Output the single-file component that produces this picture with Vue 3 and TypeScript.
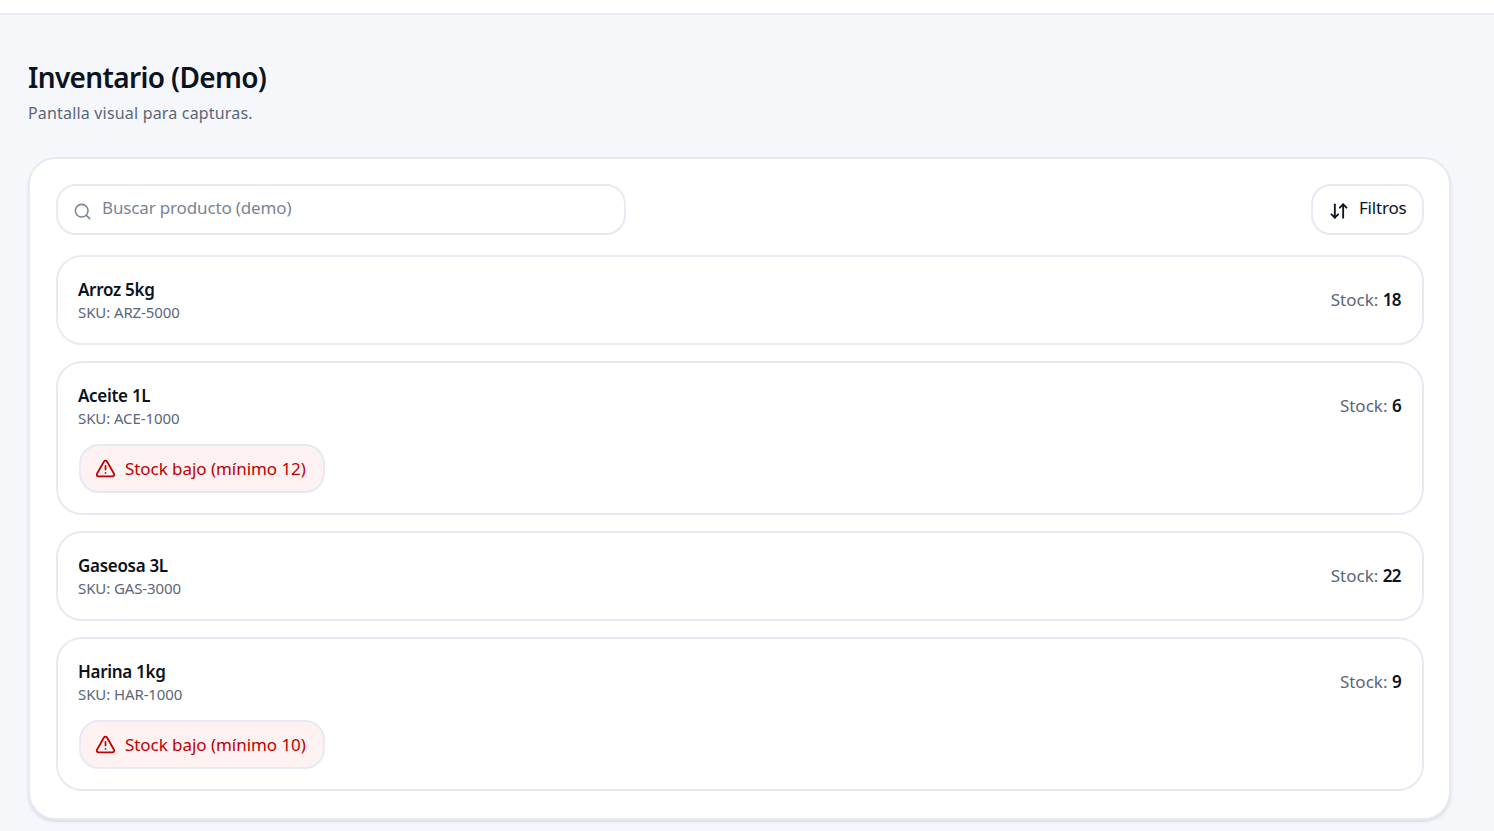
<script setup lang="ts">
interface Product {
  name: string
  sku: string
  stock: number
  min: number
}

const products: Product[] = [
  { name: 'Arroz 5kg', sku: 'ARZ-5000', stock: 18, min: 10 },
  { name: 'Aceite 1L', sku: 'ACE-1000', stock: 6, min: 12 },
  { name: 'Gaseosa 3L', sku: 'GAS-3000', stock: 22, min: 8 },
  { name: 'Harina 1kg', sku: 'HAR-1000', stock: 9, min: 10 }
]
</script>

<template>
  <div class="page">
    <header class="topbar"></header>

    <main class="content">
      <h1 class="title">Inventario (Demo)</h1>
      <p class="subtitle">Pantalla visual para capturas.</p>

      <section class="panel">
        <div class="toolbar">
          <div class="search">
            <svg class="search-icon" viewBox="0 0 24 24" fill="none" stroke="currentColor" stroke-width="2" stroke-linecap="round" stroke-linejoin="round">
              <circle cx="11" cy="11" r="8" />
              <path d="m21 21-4.3-4.3" />
            </svg>
            <span class="placeholder">Buscar producto (demo)</span>
          </div>
          <button class="filter-btn" type="button">
            <svg class="filter-icon" viewBox="0 0 24 24" fill="none" stroke="currentColor" stroke-width="2.2" stroke-linecap="round" stroke-linejoin="round">
              <path d="m3 16 4 4 4-4" />
              <path d="M7 20V4" />
              <path d="m21 8-4-4-4 4" />
              <path d="M17 4v16" />
            </svg>
            <span>Filtros</span>
          </button>
        </div>

        <div class="list">
          <article v-for="item in products" :key="item.sku" class="item">
            <div class="item-info">
              <div class="item-name">{{ item.name }}</div>
              <div class="item-sku">SKU: {{ item.sku }}</div>
              <div v-if="item.stock < item.min" class="alert">
                <svg class="alert-icon" viewBox="0 0 24 24" fill="none" stroke="currentColor" stroke-width="2" stroke-linecap="round" stroke-linejoin="round">
                  <path d="m21.73 18-8-14a2 2 0 0 0-3.48 0l-8 14A2 2 0 0 0 4 21h16a2 2 0 0 0 1.73-3" />
                  <path d="M12 9v4" />
                  <path d="M12 17h.01" />
                </svg>
                <span>Stock bajo (mínimo {{ item.min }})</span>
              </div>
            </div>
            <div class="item-stock">Stock: <b>{{ item.stock }}</b></div>
          </article>
        </div>
      </section>
    </main>
  </div>
</template>

<style>
html,
body {
  margin: 0;
  background: #f5f7fb;
  overflow: hidden;
}
</style>

<style scoped>
.page {
  min-height: 831px;
  background: #f5f7fb;
  color: #0b1220;
  font-family: "Noto Sans", "Open Sans", sans-serif;
}

.topbar {
  height: 13px;
  background: #fff;
  border-bottom: 2px solid #e6ebf3;
}

.content {
  padding: 42px 43px 0 28px;
}

.title {
  margin: 0;
  font-size: 28px;
  line-height: 40px;
  font-weight: 600;
  letter-spacing: -0.65px;
}

.subtitle {
  margin: 4px 0 0;
  font-size: 16px;
  line-height: 24px;
  color: #5b6678;
  letter-spacing: 0.18px;
}

/* PANEL */
.panel {
  margin-top: 32px;
  padding: 25px 25px 27px 26px;
  background: #fff;
  border: 2px solid #e6ebf3;
  border-radius: 28px;
  box-shadow: 0 2px 3px rgba(15, 23, 42, 0.12);
}

.toolbar {
  display: flex;
  justify-content: space-between;
  align-items: center;
  margin-bottom: 20px;
}

.search {
  display: flex;
  align-items: center;
  gap: 10px;
  box-sizing: border-box;
  width: 570px;
  height: 51px;
  padding: 0 15px;
  border: 2px solid #e6ebf3;
  border-radius: 20px;
}

.search-icon {
  width: 19px;
  height: 19px;
  margin-top: 3px;
  color: #7b8494;
}

.placeholder {
  margin-top: -5px;
  font-size: 17px;
  color: #7b8494;
  letter-spacing: -0.15px;
}

.filter-btn {
  display: flex;
  align-items: center;
  gap: 10px;
  box-sizing: border-box;
  width: 113px;
  height: 51px;
  padding: 0 0 0 16px;
  background: #fff;
  border: 2px solid #e6ebf3;
  border-radius: 20px;
  color: #0b1220;
  font: inherit;
  font-size: 17px;
  letter-spacing: -0.2px;
}

.filter-btn span {
  margin-top: -5px;
}

.filter-icon {
  width: 20px;
  height: 20px;
  margin-top: 3px;
}

/* LIST */
.list {
  display: flex;
  flex-direction: column;
  gap: 16px;
}

.item {
  display: flex;
  justify-content: space-between;
  align-items: flex-start;
  padding: 21px 21px 21px 20px;
  background: #fff;
  border: 2px solid #e6ebf3;
  border-radius: 26px;
}

.item-name {
  font-size: 17px;
  line-height: 26px;
  font-weight: 600;
  margin-top: -1px;
  letter-spacing: -0.3px;
}

.item-sku {
  margin-top: -1px;
  font-size: 15px;
  line-height: 20px;
  color: #5b6678;
  letter-spacing: -0.1px;
}

.item-stock {
  font-size: 17px;
  line-height: 26px;
  margin-top: 9px;
  color: #5b6678;
  letter-spacing: 0;
}

.item-stock b {
  font-weight: 600;
  color: #0b1220;
  letter-spacing: -0.6px;
}

.alert {
  display: flex;
  align-items: center;
  gap: 9px;
  box-sizing: border-box;
  width: 246px;
  height: 49px;
  margin: 16px 0 -1px 1px;
  padding: 0 0 0 14px;
  background: #fdf1f2;
  border: 2px solid #e6ebf3;
  border-radius: 20px;
  color: #c00000;
  font-size: 17px;
  white-space: nowrap;
  letter-spacing: -0.05px;
}

.alert-icon {
  width: 21px;
  height: 21px;
}
</style>
